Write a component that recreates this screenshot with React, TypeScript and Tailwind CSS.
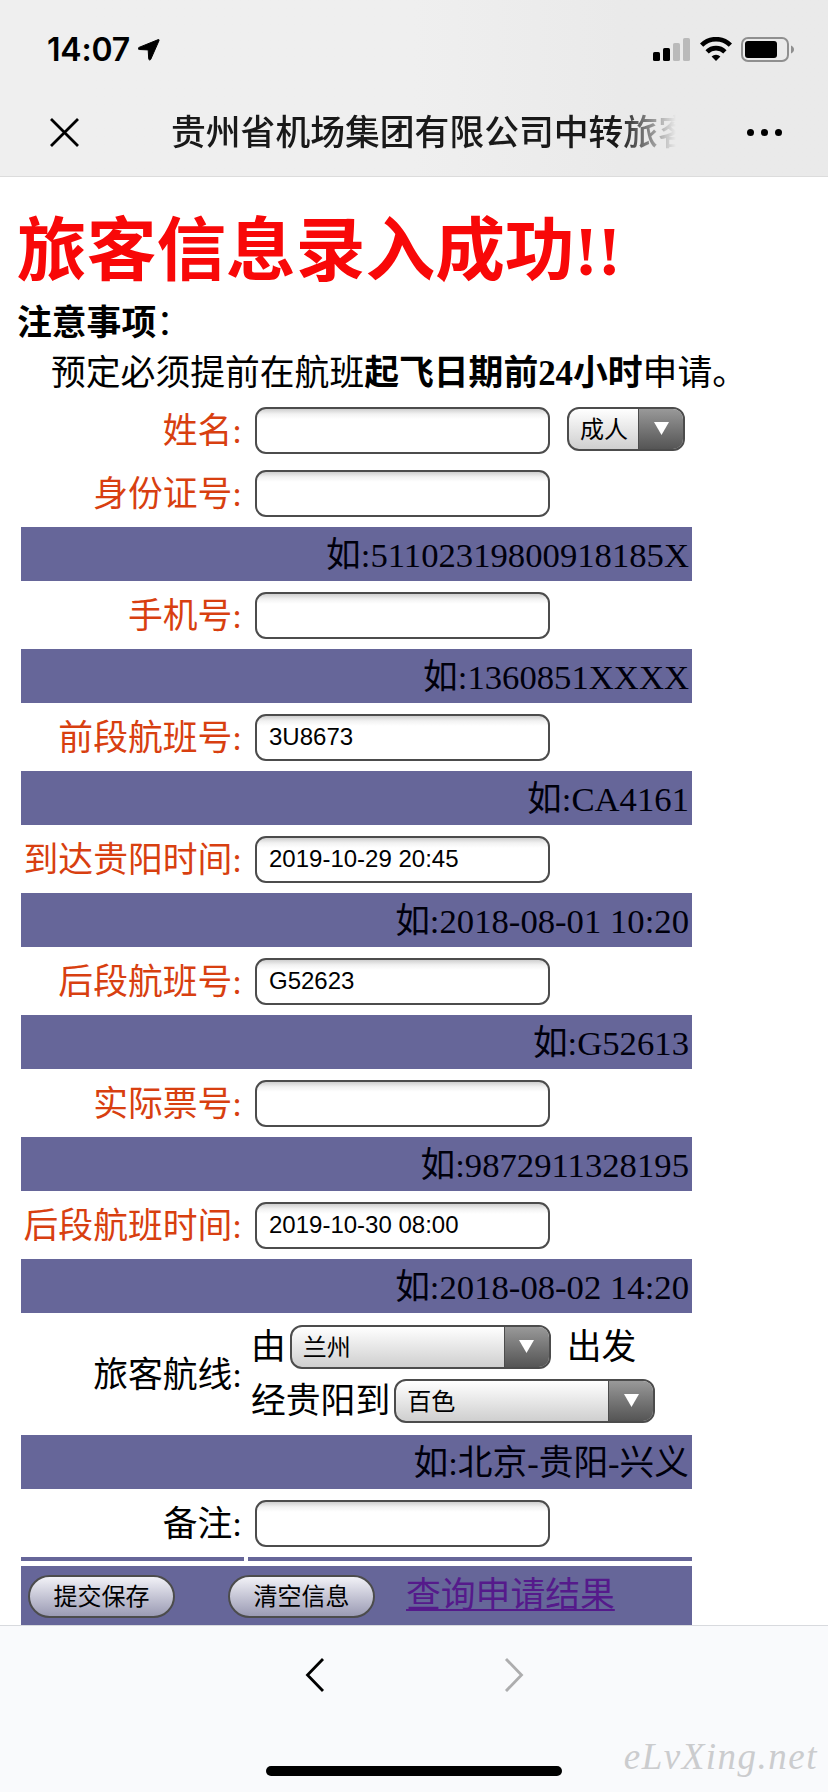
import { ReactNode } from 'react'
import clsx from 'clsx'

type Field = {
  label: string
  value: string
  hint: string
}

const fields: Field[] = [
  { label: '身份证号:', value: '', hint: '如:51102319800918185X' },
  { label: '手机号:', value: '', hint: '如:1360851XXXX' },
  { label: '前段航班号:', value: '3U8673', hint: '如:CA4161' },
  { label: '到达贵阳时间:', value: '2019-10-29 20:45', hint: '如:2018-08-01 10:20' },
  { label: '后段航班号:', value: 'G52623', hint: '如:G52613' },
  { label: '实际票号:', value: '', hint: '如:9872911328195' },
  { label: '后段航班时间:', value: '2019-10-30 08:00', hint: '如:2018-08-02 14:20' },
]

const sans = "font-['Liberation_Sans','Noto_Sans_CJK_SC',sans-serif]"

function StatusBar() {
  return (
    <div className="flex h-[88px] items-start justify-between pl-[47px] pr-[33px] pt-[37px]">
      <div className="flex items-start">
        <span className="w-[91px] whitespace-nowrap font-['Inter',sans-serif] text-[32px] font-semibold leading-[26px] tracking-[-0.2px] text-black">
          14:07
        </span>
        <svg width="22" height="22" viewBox="0 0 22 22" className="mt-[2px]">
          <path
            d="M20.3 .6 1 8.4C-.2 8.9 0 10.4 1.3 10.5L10.2 10.9 10.7 19.8C10.8 21.2 12.3 21.4 12.8 20.2L21 1.6C21.3.8 21 .3 20.3.6Z"
            fill="#000"
            stroke="#000"
            strokeWidth="1"
          />
        </svg>
      </div>
      <div className="flex items-start">
        <svg width="38" height="24" viewBox="0 0 38 24" className="mt-px">
          <rect x="0" y="14" width="7" height="9" rx="1.6" />
          <rect x="10" y="10" width="7" height="13" rx="1.6" />
          <rect x="20" y="5" width="7" height="18" rx="1.6" fill="#bababa" />
          <rect x="30" y="0" width="7" height="23" rx="1.6" fill="#bababa" />
        </svg>
        <svg width="32" height="24" viewBox="0 0 32 24" className="ml-[9px]">
          <g fill="none" stroke="#000" strokeWidth="4.6">
            <path d="M1.600 8.100A20.400 20.400 0 0 1 30.400 8.100" />
            <path d="M7.100 14.800A12.600 12.600 0 0 1 24.900 14.800" />
          </g>
          <path d="M16 24 11.600 19.500A6.300 6.300 0 0 1 20.400 19.500Z" />
        </svg>
        <svg width="54" height="25" viewBox="0 0 54 25" className="ml-[9px]">
          <rect x="1" y="1" width="46" height="23" rx="6" fill="none" stroke="#8f8f8f" strokeWidth="2" />
          <rect x="4" y="4" width="32" height="17" rx="3" />
          <path d="M50 8.500C54 10 54 15 50 16.500Z" fill="#8f8f8f" />
        </svg>
      </div>
    </div>
  )
}

function TitleBar() {
  return (
    <div className="flex h-[88px] items-center pl-[50px] pr-[46px]">
      <svg width="29" height="29" viewBox="0 0 29 29">
        <path d="M1 1 28 28M28 1 1 28" stroke="#000" strokeWidth="2.8" />
      </svg>
      <h2
        className={clsx(
          sans,
          'ml-[92px] mt-[2px] w-[505px] overflow-hidden whitespace-nowrap text-[34.8px] font-medium leading-[50px] text-[#191919]',
          '[mask-image:linear-gradient(to_right,#000_448px,transparent_505px)]'
        )}
      >
        贵州省机场集团有限公司中转旅客
      </h2>
      <div className="ml-auto flex gap-[7px]">
        <i className="size-[7px] rounded-full bg-black" />
        <i className="size-[7px] rounded-full bg-black" />
        <i className="size-[7px] rounded-full bg-black" />
      </div>
    </div>
  )
}

function Label({ children, dark }: { children: ReactNode; dark?: boolean }) {
  return (
    <span
      className={clsx(
        'w-[221px] shrink-0 whitespace-nowrap pt-[3px] text-right text-[34.8px] leading-[44px]',
        dark ? 'text-black' : 'text-[#d83f10]'
      )}
    >
      {children}
    </span>
  )
}

function TextBox({ value = '' }: { value?: string }) {
  return (
    <div
      className={clsx(
        sans,
        'ml-[13px] h-[47px] w-[295px] shrink-0 rounded-[11px] border-2 border-[#4c4c4c] bg-white pl-[12px] text-[24px] leading-[41px] text-black',
        'bg-[linear-gradient(to_bottom,#cfcfcf_0,#f2f2f2_5px,#fff_10px)]'
      )}
    >
      {value}
    </div>
  )
}

function Select({ value, className }: { value: string; className: string }) {
  return (
    <div
      className={clsx(
        sans,
        'flex h-[44px] shrink-0 overflow-hidden rounded-[12px] border-2 border-[#4c4c4c] bg-linear-to-b from-white to-[#cfcfcf] text-[24px] leading-[41px] text-black',
        className
      )}
    >
      <span className="flex-1 pl-[11px]">{value}</span>
      <span className="flex w-[45px] justify-center border-l border-[#4c4c4c] bg-linear-to-b from-[#999] to-[#555]">
        <svg width="15" height="13" viewBox="0 0 15 13" className="mt-[13px]">
          <path d="M0 0H15L7.500 13Z" fill="#fff" />
        </svg>
      </span>
    </div>
  )
}

function Hint({ children }: { children: ReactNode }) {
  return (
    <div className="h-[54px] bg-[#666699] pr-[3px] text-right text-[34.700px] leading-[58px] text-[#00000c]">
      {children}
    </div>
  )
}

function PillButton({ children }: { children: ReactNode }) {
  return (
    <button
      className={clsx(
        sans,
        'h-[43px] w-[147px] rounded-full border-2 border-[#4c4c4c] bg-linear-to-b from-[#f2f2f7] to-[#9b9bb4] text-[24px] leading-[38px] text-black'
      )}
    >
      {children}
    </button>
  )
}

export default function App() {
  return (
    <div className="flex h-[1792px] w-[828px] flex-col overflow-hidden bg-white font-['Liberation_Serif','Noto_Sans_CJK_SC',serif]">
      <header className="h-[177px] shrink-0 border-b border-[#dcdcdc] bg-linear-to-r from-[#efefef] from-50% to-[#eaeaea] to-75%">
        <StatusBar />
        <TitleBar />
      </header>

      <main className="h-[1448px] shrink-0 overflow-hidden text-black">
        <div className="pl-[17px]">
          <h1 className="h-[122px] whitespace-nowrap pt-[33px] text-[69.700px] font-bold leading-[84px] text-[#f80808]">
            旅客信息录入成功!!
          </h1>
          <p className="h-[50px] text-[34.800px] leading-[50px]">
            <b>注意事项</b>：
          </p>
          <p className="h-[48px] whitespace-nowrap pl-[34px] text-[34.800px] leading-[50px]">
            预定必须提前在航班<b>起飞日期前24小时</b>申请。
          </p>
        </div>

        <form className="ml-[21px] w-[671px]">
          <div className="flex h-[73px] items-start pt-[10px]">
            <Label>姓名:</Label>
            <TextBox />
            <Select value="成人" className="ml-[17px] w-[118px]" />
          </div>

          {fields.map((field, i) => (
            <div key={field.label}>
              <div className={clsx('flex items-start', i === 0 ? 'h-[57px]' : 'h-[68px] pt-[11px]')}>
                <Label>{field.label}</Label>
                <TextBox value={field.value} />
              </div>
              <Hint>{field.hint}</Hint>
            </div>
          ))}

          <div className="flex h-[122px] items-center">
            <Label dark>旅客航线:</Label>
            <div className="ml-[9px] flex flex-col gap-[10px] whitespace-nowrap text-[34.800px] leading-[46px]">
              <div className="flex h-[44px]">
                由
                <Select value="兰州" className="ml-[4px] w-[261px]" />
                <span className="ml-[16px]">出发</span>
              </div>
              <div className="flex h-[44px]">
                经贵阳到
                <Select value="百色" className="ml-[4px] w-[261px]" />
              </div>
            </div>
          </div>
          <Hint>如:北京-贵阳-兴义</Hint>

          <div className="flex h-[68px] items-start pt-[11px]">
            <Label dark>备注:</Label>
            <TextBox />
          </div>

          <div className="flex h-[4px] gap-[4px]">
            <div className="w-[223px] bg-[#666699]" />
            <div className="flex-1 bg-[#666699]" />
          </div>
          <div className="mt-[5px] flex h-[59px] items-start bg-[#666699] pl-[7px] pt-[9px]">
            <PillButton>提交保存</PillButton>
            <div className="w-[53px]" />
            <PillButton>清空信息</PillButton>
            <a className="ml-[31px] whitespace-nowrap text-[34.800px] leading-[41px] text-[#551a8b] underline decoration-2 underline-offset-[2px]">
              查询申请结果
            </a>
          </div>
        </form>
      </main>

      <footer className="relative flex flex-1 flex-col items-center border-t border-[#d8dade] bg-[#f9fafc]">
        <nav className="flex w-full pl-[305px] pt-[32px]">
          <svg width="20" height="34" viewBox="0 0 20 34">
            <path d="M18 1 2.500 17 18 33" fill="none" stroke="#000" strokeWidth="2.8" />
          </svg>
          <svg width="20" height="34" viewBox="0 0 20 34" className="ml-[179px]">
            <path d="M2 1 17.500 17 2 33" fill="none" stroke="#adadae" strokeWidth="2.8" />
          </svg>
        </nav>
        <div className="mt-[74px] h-[10px] w-[296px] rounded-full bg-black" />
        <span className="absolute right-[10px] top-[107px] text-[37px] italic leading-[48px] tracking-[1.500px] text-[#cbccce]">
          eLvXing.net
        </span>
      </footer>
    </div>
  )
}
